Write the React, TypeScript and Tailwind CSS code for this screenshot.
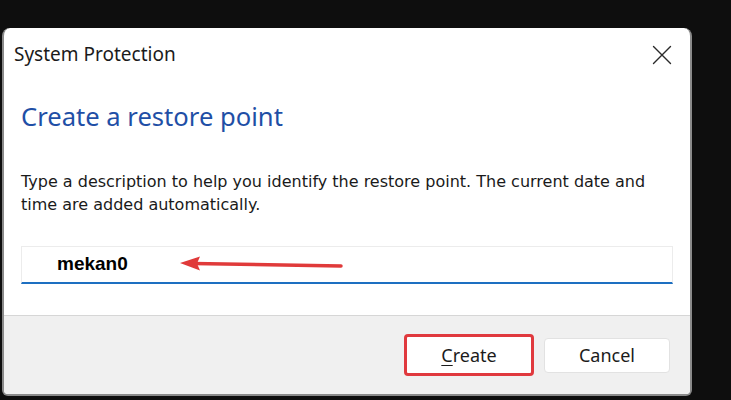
export default function App() {
  return (
    <div className="w-[731px] h-[400px] bg-[#0e0e0e] pt-[28px] pl-[2px] overflow-hidden">
      <div className="w-[690px] h-[368px] flex flex-col bg-white rounded-t-[8px] rounded-b-[6px] border-l-2 border-r-2 border-b-2 border-[#8a8a8a] overflow-hidden">
        <div className="h-[52px] flex items-center justify-between pl-[10px] pr-[18px] shrink-0">
          <span className="text-[19px] text-[#1b1b1b] font-['Noto_Sans',sans-serif]">System Protection</span>
          <svg width="20" height="20" viewBox="0 0 20 20" className="mt-[1px]">
            <path d="M1.5 1.5 L18.5 18.5 M18.5 1.5 L1.5 18.5" stroke="#2a2a2a" strokeWidth="1.4" strokeLinecap="round" />
          </svg>
        </div>

        <div className="flex-1 flex flex-col pl-[17px] pr-[17px]">
          <h1 className="mt-[21px] text-[25.6px] leading-[31px] text-[#1f4fa6] font-['Noto_Sans',sans-serif]">
            Create a restore point
          </h1>
          <p className="mt-[38px] text-[16px] leading-[23px] text-[#1a1a1a] font-['DejaVu_Sans',sans-serif]">
            Type a description to help you identify the restore point. The current date and time are added automatically.
          </p>
          <div className="relative mt-[30px] h-[38px] flex items-center bg-white border border-[#ececec] border-b-2 border-b-[#1d6fc1] pl-[35px]">
            <span className="text-[19px] font-bold text-black font-['Liberation_Sans',sans-serif]">mekan0</span>
            <svg className="absolute left-[157px] top-[9px]" width="164" height="18" viewBox="0 0 164 18">
              <path d="M14 7.5 L162 10" stroke="#e03a3a" strokeWidth="3.5" strokeLinecap="round" />
              <path d="M1 7 L21 0.5 L18 7.6 L21 14.5 Z" fill="#e03a3a" />
            </svg>
          </div>
        </div>

        <div className="h-[79px] shrink-0 flex items-center justify-end gap-[10px] pr-[20px] bg-[#f0f0f0] border-t border-[#d6d6d6]">
          <button className="w-[130px] h-[42px] rounded-[4px] border-[3px] border-[#e0393e] bg-white text-[18px] text-[#1b1b1b] font-['Noto_Sans',sans-serif]">
            <span className="underline underline-offset-[3px] decoration-1">C</span>reate
          </button>
          <button className="w-[126px] h-[35px] rounded-[4px] border border-[#e2e2e2] bg-white text-[18px] text-[#1b1b1b] font-['Noto_Sans',sans-serif]">
            Cancel
          </button>
        </div>
      </div>
    </div>
  )
}
